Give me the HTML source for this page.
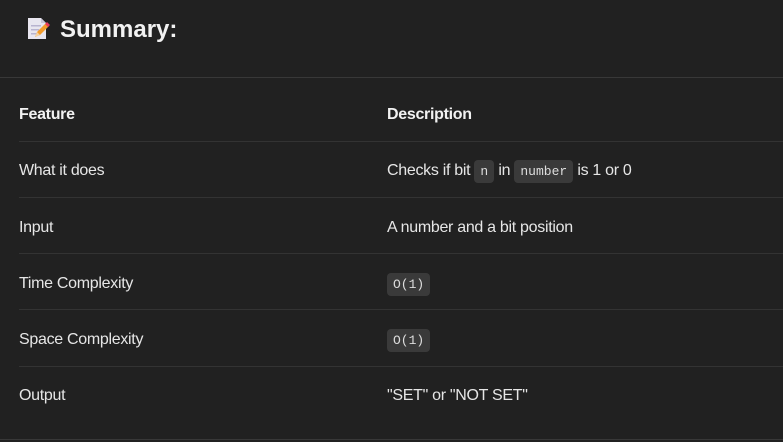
<!DOCTYPE html>
<html><head><meta charset="utf-8"><style>
html,body{margin:0;padding:0;width:783px;height:442px;background:#212121;overflow:hidden;font-family:"Liberation Sans",sans-serif;color:#e6e6e6}
.t{position:absolute;font-size:16px;line-height:20px;white-space:nowrap;letter-spacing:-0.3px}
.h{font-weight:bold;color:#f2f2f2}
.line{position:absolute;height:1px;background:#333}
code{font-family:"Liberation Mono",monospace;font-size:13px;background:#3a3a3a;border-radius:4px;padding:4px 6px;color:#ddd;letter-spacing:0}
</style></head><body>
<svg style="position:absolute;left:25px;top:16px" width="26" height="26" viewBox="0 0 24 26">
<path d="M2 2h13l5 5v16H2z" fill="#e8e6f0"/>
<path d="M15 2v5h5z" fill="#c9c5d6"/>
<rect x="5" y="9" width="10" height="1.5" fill="#b8b4d0"/>
<rect x="5" y="13" width="8" height="1.5" fill="#b8b4d0"/>
<rect x="5" y="17" width="6" height="1.5" fill="#b8b4d0"/>
<path d="M9 21l2-5 9-9 3 3-9 9z" fill="#f39c2c"/>
<path d="M19 8l2-2 3 3-2 2z" fill="#e8385a"/>
<path d="M9 21l2-5 3 3z" fill="#f6d2a0"/>
</svg>
<div class="t h" style="left:60px;top:15px;font-size:24px;line-height:30px;letter-spacing:0">Summary:</div>
<div class="line" style="left:0;top:77px;width:783px;background:#383838"></div>
<div class="t h" style="left:19px;top:105px">Feature</div>
<div class="t h" style="left:387px;top:105px">Description</div>
<div class="line" style="left:19px;top:141px;width:764px"></div>
<div class="t" style="left:19px;top:161px">What it does</div>
<div class="t" style="left:387px;top:161px">Checks if bit <code>n</code> in <code>number</code> is 1 or 0</div>
<div class="line" style="left:19px;top:197px;width:764px"></div>
<div class="t" style="left:19px;top:218px">Input</div>
<div class="t" style="left:387px;top:218px">A number and a bit position</div>
<div class="line" style="left:19px;top:253px;width:764px"></div>
<div class="t" style="left:19px;top:274px">Time Complexity</div>
<div class="t" style="left:387px;top:274px"><code>O(1)</code></div>
<div class="line" style="left:19px;top:309px;width:764px"></div>
<div class="t" style="left:19px;top:330px">Space Complexity</div>
<div class="t" style="left:387px;top:330px"><code>O(1)</code></div>
<div class="line" style="left:19px;top:366px;width:764px"></div>
<div class="t" style="left:19px;top:386px">Output</div>
<div class="t" style="left:387px;top:386px">"SET" or "NOT SET"</div>
<div class="line" style="left:0;top:439px;width:783px;background:#383838"></div>
</body></html>
